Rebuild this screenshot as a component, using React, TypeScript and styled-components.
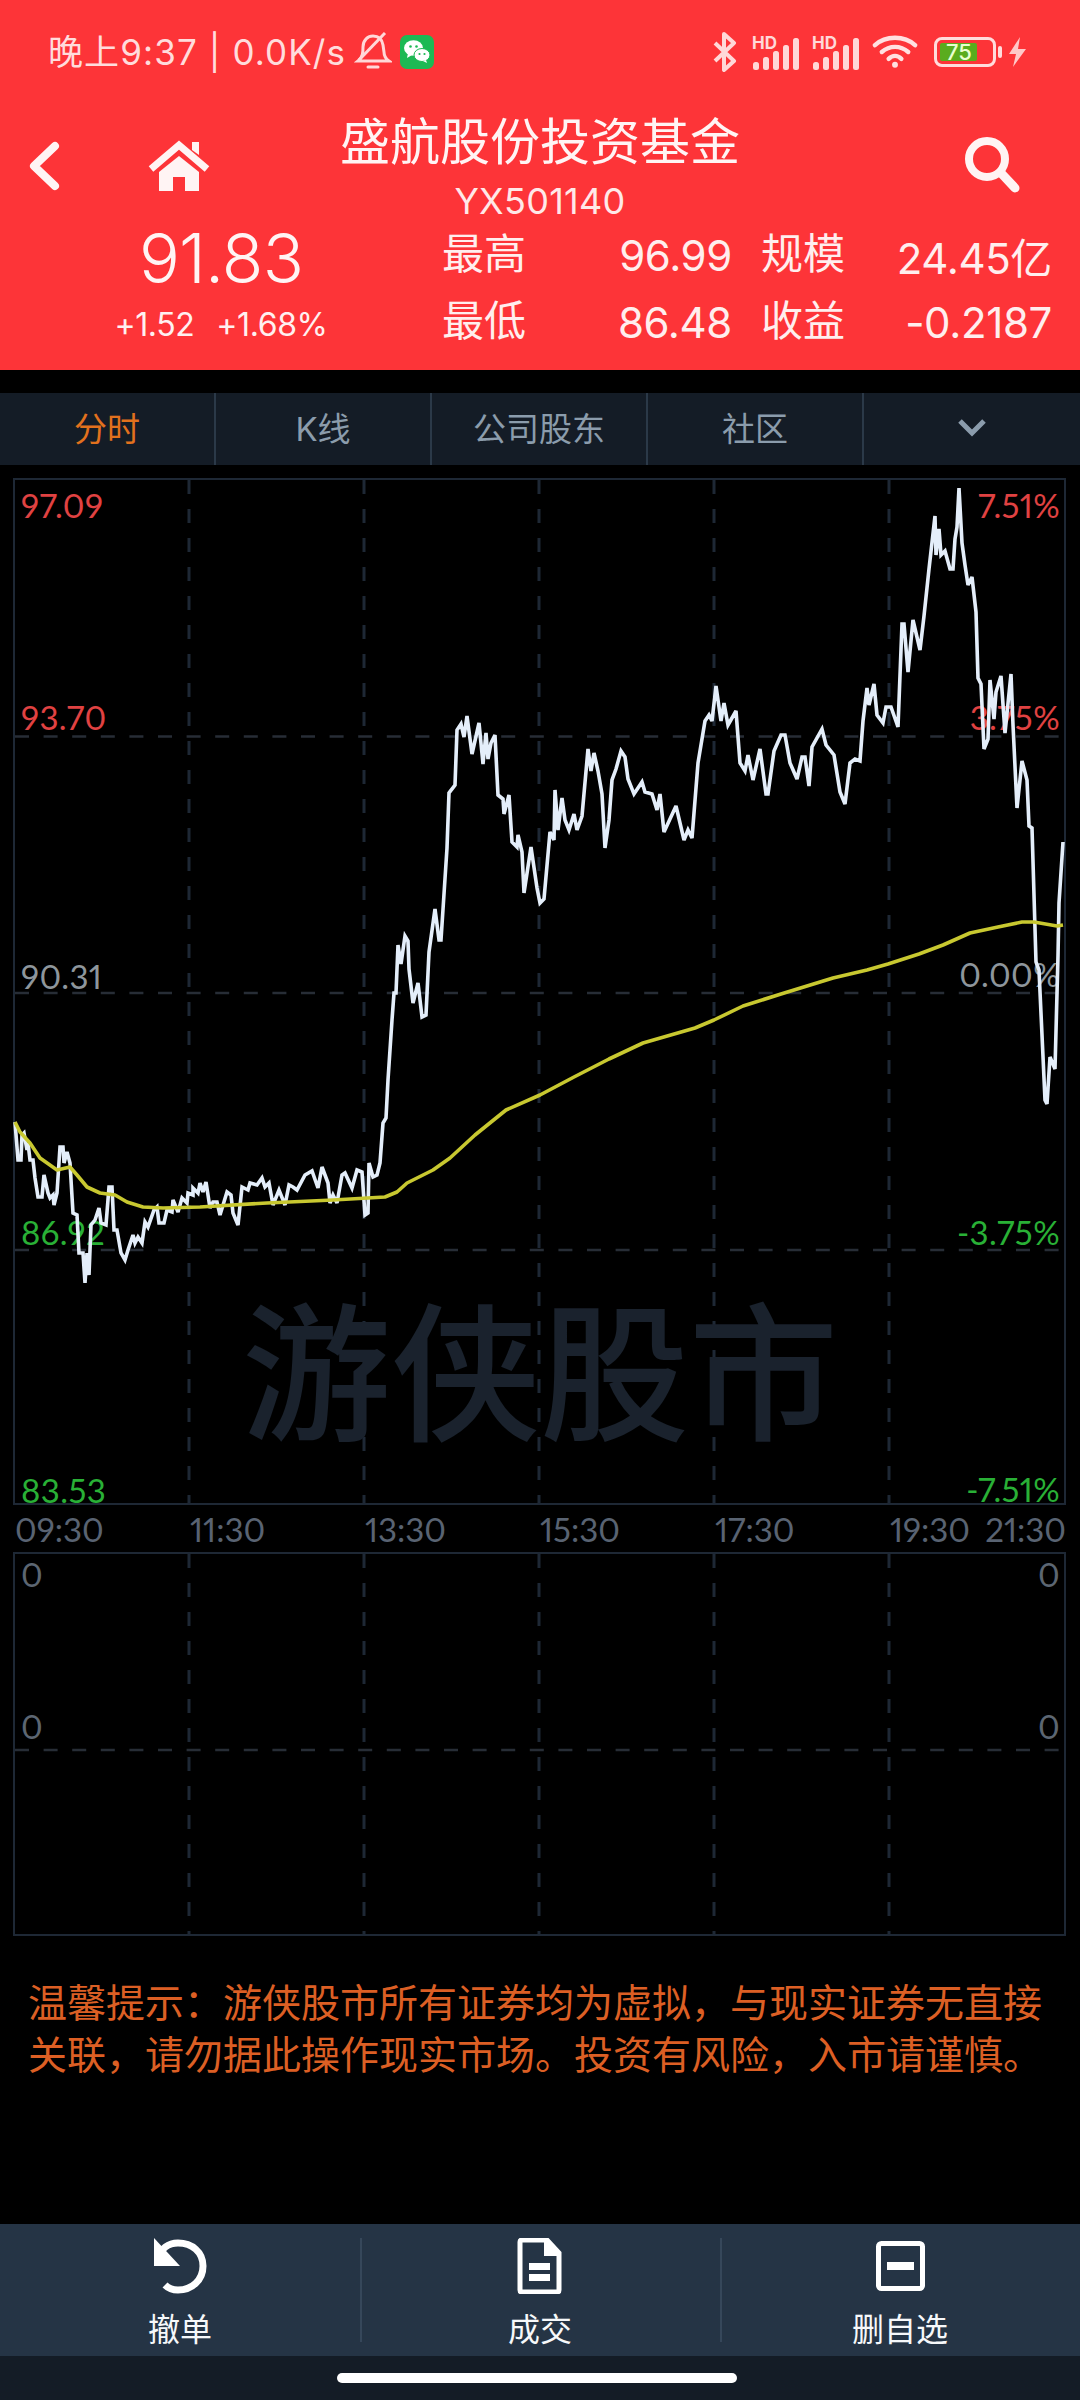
import React from "react";
import styled, { createGlobalStyle } from "styled-components";

const GlobalStyle = createGlobalStyle`
  html, body { margin: 0; padding: 0; background: #000; }
  body { width: 1080px; height: 2400px; overflow: hidden; font-family: Inter, "Noto Sans CJK SC", sans-serif; }
  #root { width: 1080px; height: 2400px; }
`;

const CJK = `Inter, "Noto Sans CJK SC", sans-serif`;
const NUM = `Lato, "Noto Sans CJK SC", sans-serif`;

const Page = styled.div`
  width: 1080px; height: 2400px; background: #000; display: flex; flex-direction: column; font-family: ${CJK};
`;
const Header = styled.header`
  height: 370px; background: #fd3438; color: #fff0f0; display: flex; flex-direction: column; flex: none;
`;
const StatusBar = styled.div`
  height: 104px; display: flex; align-items: center; justify-content: space-between; padding: 0 53px 0 48px; flex: none; color: #ffdcdc;
`;
const StatusGroup = styled.div<{ $gap: number }>`
  display: flex; align-items: center; gap: ${p => p.$gap}px;
`;
const StatusText = styled.span`
  font-size: 35px; line-height: 40px; letter-spacing: 1.1px; white-space: nowrap; font-weight: 400;
`;
const NavRow = styled.div`
  height: 118px; position: relative; display: flex; align-items: flex-start; justify-content: center; flex: none;
`;
const NavLeft = styled.div`
  position: absolute; left: 28px; top: 36px; display: flex; align-items: center; gap: 88px;
`;
const NavRight = styled.div`
  position: absolute; right: 59px; top: 31px;
`;
const TitleBlock = styled.div`
  display: flex; flex-direction: column; align-items: center; width: 500px; padding-top: 11px;
`;
const Title = styled.div`
  font-size: 50px; line-height: 54px; color: #fff4f4; white-space: nowrap;
`;
const Code = styled.div`
  font-size: 36px; line-height: 40px; margin-top: 12px; letter-spacing: 0.3px; color: #ffe8e8;
`;
const QuoteRow = styled.div`
  flex: 1; display: flex; align-items: flex-start;
`;
const PriceBlock = styled.div`
  width: 442px; flex: none; display: flex; flex-direction: column; align-items: center;
`;
const Price = styled.div`
  font-size: 68px; line-height: 72px; font-weight: 300; letter-spacing: -0.8px; color: #fff4f4;
`;
const Change = styled.div`
  display: flex; gap: 22px; margin-top: 13px; font-size: 32px; line-height: 36px; letter-spacing: -0.4px;
`;
const StatsGrid = styled.div`
  display: grid; grid-template-columns: 290px 291px; grid-auto-rows: 67px; column-gap: 29px; margin-top: -5px;
`;
const StatCell = styled.div`
  display: flex; justify-content: space-between; align-items: center; font-size: 42px; color: #ffeeee; white-space: nowrap;
`;
const StatValue = styled.span`
  font-size: 42px; letter-spacing: -0.35px; padding-top: 9px;
`;
const Tabs = styled.nav`
  margin-top: 23px; height: 72px; background: #141c26; display: grid; grid-template-columns: repeat(5, 216px); flex: none;
`;
const Tab = styled.div<{ $active?: boolean }>`
  display: flex; align-items: center; justify-content: center; font-size: 33px; padding-bottom: 5px; box-sizing: border-box;
  color: ${p => (p.$active ? "#e2711d" : "#8b9cac")};
  border-right: 2px solid #2b3948;
  &:last-child { border-right: none; }
`;
const ChartPanel = styled.section`
  position: relative; margin: 13px 14px 0 13px; height: 1027px; box-sizing: border-box; border: 2px solid #1e2835; flex: none;
`;
const VolumePanel = styled.section`
  position: relative; margin: 0 14px 0 13px; height: 384px; box-sizing: border-box; border: 2px solid #1e2835; flex: none;
`;
const ChartSvg = styled.svg`
  position: absolute; left: 0; top: 0; overflow: visible; z-index: 2; display: block;
`;
const GridSvg = styled.svg`
  position: absolute; left: 0; top: 0; overflow: visible; z-index: 0; display: block;
`;
const Watermark = styled.div`
  position: absolute; left: 227px; top: 799px; font-size: 149px; line-height: 170px; color: #1a222d; white-space: nowrap; z-index: 0; font-family: "Noto Sans CJK SC", sans-serif; font-weight: 500;
`;
const AxisLabel = styled.span<{ $top: number; $right?: boolean; $color: string }>`
  position: absolute; top: ${p => p.$top}px; ${p => (p.$right ? "right: 4px;" : "left: 6px;")}
  font-family: ${NUM}; font-size: 33px; line-height: 36px; color: ${p => p.$color}; z-index: 1; font-weight: 400; letter-spacing: 0.4px;
  font-variant-numeric: proportional-nums;
`;
const TimeAxis = styled.div`
  height: 47px; margin-left: 15px; margin-right: 14px; display: grid; grid-template-columns: 175px 175px 175px 175px 175px 98px minmax(0, 1fr); align-items: center; flex: none;
  font-family: ${NUM}; font-size: 33px; color: #596372; font-weight: 400; font-variant-numeric: proportional-nums;
`;
const TimeEnd = styled.span`
  justify-self: end; white-space: nowrap;
`;
const Notice = styled.p`
  margin: 41px 26px 0 28px; font-size: 39px; line-height: 52px; color: #dc5f24; flex: none;
`;
const Spacer = styled.div`
  flex: 1;
`;
const ActionBar = styled.div`
  height: 132px; background: #253445; display: grid; grid-template-columns: repeat(3, 360px); flex: none;
`;
const Action = styled.div`
  display: flex; flex-direction: column; align-items: center; position: relative; color: #f6f8fa; padding-top: 14px; box-sizing: border-box;
  & + &::before { content: ""; position: absolute; left: 0; top: 14px; bottom: 14px; width: 2px; background: #36475a; }
`;
const ActionIcon = styled.svg`
  display: block; height: 56px; width: 60px; flex: none;
`;
const ActionLabel = styled.span`
  font-size: 32px; line-height: 40px; margin-top: 16px;
`;
const HomeBar = styled.div`
  height: 44px; background: #141c26; display: flex; justify-content: center; padding: 17px 7px 0 0; box-sizing: border-box; flex: none;
`;
const HomePill = styled.div`
  width: 400px; height: 10px; border-radius: 5px; background: #fff;
`;

const priceLine = "15,1122 18,1160 21,1160 22,1135 24,1133 27,1150 28,1143 30,1160 33,1160 35,1178 38,1197 42,1197 44,1175 48,1193 50,1198 53,1195 54,1205 57,1193 60,1147 63,1147 64,1163 67,1152 70,1163 73,1213 77,1215 79,1253 83,1253 85,1283 87,1253 89,1275 91,1225 95,1220 99,1208 101,1223 106,1225 109,1187 112,1187 114,1230 117,1230 121,1253 125,1260 128,1250 133,1235 135,1243 138,1237 142,1243 145,1222 148,1227 154,1210 157,1207 159,1223 164,1223 167,1210 172,1212 173,1200 178,1212 182,1198 187,1203 188,1193 193,1195 193,1188 198,1193 200,1183 203,1192 206,1182 210,1208 213,1202 217,1202 220,1215 227,1192 231,1195 233,1213 238,1225 242,1187 248,1190 250,1183 257,1185 262,1178 265,1187 269,1183 273,1205 279,1190 285,1205 289,1185 293,1187 297,1190 305,1175 312,1171 318,1188 322,1167 328,1183 330,1203 333,1195 337,1203 342,1175 345,1173 352,1188 357,1170 362,1172 365,1215 368,1213 369,1163 373,1177 377,1175 380,1163 383,1123 386,1118 388,1080 392,1020 394,993 396,993 398,945 401,964 405,936 408,941 409,969 413,1003 418,983 422,1017 426,1015 429,952 435,909 439,940 441,940 447,848 449,793 455,785 457,730 461,724 464,737 467,716 472,754 479,723 483,764 486,733 488,759 491,743 495,735 498,795 503,799 504,814 509,795 512,842 517,847 518,835 522,852 524,893 531,847 537,888 540,903 544,899 550,832 554,840 555,790 558,830 562,798 565,820 569,830 574,814 577,830 582,816 588,749 591,771 594,753 598,771 602,794 605,848 609,820 612,780 616,769 621,751 625,757 628,779 634,794 642,782 645,792 652,794 657,810 660,794 664,832 676,806 684,840 688,830 692,838 698,763 705,721 709,715 712,721 716,686 721,721 724,703 728,725 736,711 740,763 745,771 748,755 753,780 760,749 766,794 768,794 774,751 781,735 785,735 790,763 797,779 802,757 805,757 809,786 812,747 822,729 826,745 834,755 840,792 845,804 850,763 855,759 860,761 863,721 867,688 869,705 874,684 877,715 883,723 886,707 891,707 898,727 902,624 904,624 908,672 913,620 920,650 924,616 929,569 935,516 936,555 939,529 941,555 945,551 950,569 953,569 955,539 957,527 959,488 962,543 965,565 968,585 972,577 976,612 978,678 981,684 984,749 988,739 990,680 994,719 996,692 1001,676 1005,733 1011,674 1013,725 1017,808 1022,761 1027,780 1029,826 1032,828 1036,962 1039,970 1045,1100 1047,1104 1050,1057 1055,1069 1058,956 1059,903 1063,842";
const avgLine = "15,1122 20,1132 30,1143 40,1158 57,1170 70,1167 77,1175 87,1187 100,1193 115,1195 127,1202 143,1207 163,1208 200,1207 267,1203 333,1200 385,1197 397,1192 407,1183 433,1170 450,1158 475,1135 506,1110 540,1095 574,1077 609,1059 643,1043 695,1028 714,1020 743,1006 781,994 833,978 867,970 888,964 919,954 943,945 970,933 998,927 1022,922 1034,922 1057,926 1063,925";

const VX = [189, 364, 539, 714, 889];
const RED = "#e04242";
const GREEN = "#29b036";
const GREY = "#8e969c";
const ZERO = "#5c6672";

function Grid({ w, h, ox, oy, hs }: { w: number; h: number; ox: number; oy: number; hs: number[] }) {
  return (
    <GridSvg width={w} height={h} viewBox={`${ox} ${oy} ${w} ${h}`}>
      {VX.map(x => (
        <line key={x} x1={x} x2={x} y1={oy} y2={oy + h} stroke="#1e2835" strokeWidth="3" strokeDasharray="14 15" />
      ))}
      {hs.map(y => (
        <line key={y} x1={ox} x2={ox + w} y1={y} y2={y} stroke="#272d36" strokeWidth="2.5" strokeDasharray="14 14.6" />
      ))}
    </GridSvg>
  );
}

function Bell() {
  return (
    <svg width="38" height="40" viewBox="0 0 38 40" fill="none" stroke="#ffd8d8" strokeWidth="3">
      <path d="M4 29 C9 25 9 20 9 15 C9 8 14 4 19 4 C24 4 28 7 29 13 L30 20 C30 24 32 27 35 29 Z" />
      <path d="M14 35 H24" strokeLinecap="round" />
      <path d="M5 28 L31 1" />
    </svg>
  );
}
function WeChat() {
  return (
    <svg width="34" height="34" viewBox="0 0 34 34">
      <rect width="34" height="34" rx="7" fill="#1db954" />
      <ellipse cx="13.5" cy="13" rx="9.5" ry="7.8" fill="#fff" />
      <path d="M8 18 L7 23 L12 20 Z" fill="#fff" />
      <ellipse cx="22" cy="20" rx="8" ry="6.5" fill="#fff" stroke="#1db954" strokeWidth="1" />
      <path d="M26 25 L27 28 L23 26 Z" fill="#fff" />
      <circle cx="10.5" cy="11.5" r="1.3" fill="#1db954" /><circle cx="16.5" cy="11.5" r="1.3" fill="#1db954" />
      <circle cx="19.5" cy="19" r="1.1" fill="#1db954" /><circle cx="24.5" cy="19" r="1.1" fill="#1db954" />
    </svg>
  );
}
const BluetoothSvg = styled.svg`
  margin-right: 2px;
`;
function Bluetooth() {
  return (
    <BluetoothSvg width="26" height="40" viewBox="0 0 26 40" fill="none" stroke="#ffd8d8" strokeWidth="4" strokeLinejoin="round">
      <path d="M3 11 L22 29 L12 38 V2 L22 11 L3 29" />
    </BluetoothSvg>
  );
}
function Signal() {
  const bars = [[1, 8], [11, 13], [21, 19], [31, 25], [41, 32]];
  return (
    <svg width="48" height="42" viewBox="0 0 48 42">
      <text x="0" y="18" fontSize="17" fontWeight="700" fill="#ffd8d8" fontFamily="Inter, sans-serif">HD</text>
      {bars.map(([x, h]) => (
        <rect key={x} x={x} y={39 - h} width="6" height={h} rx="2.5" fill="#ffd8d8" />
      ))}
    </svg>
  );
}
function Wifi() {
  return (
    <svg width="47" height="36" viewBox="0 0 48 36" fill="none" stroke="#ffe0e0" strokeWidth="4.5" strokeLinecap="round">
      <path d="M3 11 C14 1 33 1 44 11" />
      <path d="M10 18 C18 11 29 11 37 18" />
      <path d="M17 25 C21 21 26 21 30 25" />
      <circle cx="23.5" cy="31" r="3" fill="#ffe0e0" stroke="none" />
    </svg>
  );
}
const Battery = styled.div`
  display: flex; align-items: center; gap: 2px; margin-left: 3px; margin-right: -7px;
`;
const BatteryShell = styled.div`
  width: 62px; height: 30px; box-sizing: border-box; border: 3px solid #ffdcdc; border-radius: 8px; padding: 3px; display: flex;
`;
const BatteryFill = styled.div`
  width: 62%; background: #5aac1e; border-radius: 2px; color: #e9ffd0; font-size: 22px; line-height: 18px; padding-left: 6px; font-weight: 500; white-space: nowrap;
`;
const BatteryKnob = styled.div`
  width: 4px; height: 12px; border-radius: 2px; background: #ffdcdc;
`;
function Bolt() {
  return (
    <svg width="20" height="30" viewBox="0 0 20 30">
      <path d="M13 0 L2 17 H9 L6 30 L19 12 H11 Z" fill="#ffc8c8" />
    </svg>
  );
}

export default function App() {
  return (
    <Page>
      <GlobalStyle />
      <Header>
        <StatusBar>
          <StatusGroup $gap={8}>
            <StatusText>晚上9:37 | 0.0K/s</StatusText>
            <Bell />
            <WeChat />
          </StatusGroup>
          <StatusGroup $gap={12}>
            <Bluetooth />
            <Signal />
            <Signal />
            <Wifi />
            <Battery>
              <BatteryShell><BatteryFill>75</BatteryFill></BatteryShell>
              <BatteryKnob />
            </Battery>
            <Bolt />
          </StatusGroup>
        </StatusBar>
        <NavRow>
          <NavLeft>
            <svg width="32" height="50" viewBox="0 0 32 50" fill="none" stroke="#fff4f4" strokeWidth="8" strokeLinecap="round" strokeLinejoin="round">
              <path d="M27 5 L6 25 L27 45" />
            </svg>
            <svg width="62" height="52" viewBox="0 0 62 52">
              <path d="M3 29 L31 5 L59 29" fill="none" stroke="#fff4f4" strokeWidth="7" strokeLinejoin="miter" />
              <path d="M44 2 H51 V15 L44 10 Z" fill="#fff4f4" />
              <path d="M31 16 L51 32 V51 H37 V37 H25 V51 H11 V32 Z" fill="#fff4f4" />
            </svg>
          </NavLeft>
          <TitleBlock>
            <Title>盛航股份投资基金</Title>
            <Code>YX501140</Code>
          </TitleBlock>
          <NavRight>
            <svg width="58" height="58" viewBox="0 0 58 58" fill="none" stroke="#fff4f4" strokeLinecap="round">
              <circle cx="24" cy="24" r="18" strokeWidth="8" />
              <path d="M38 38 L52 53" strokeWidth="9" />
            </svg>
          </NavRight>
        </NavRow>
        <QuoteRow>
          <PriceBlock>
            <Price>91.83</Price>
            <Change><span>+1.52</span><span>+1.68%</span></Change>
          </PriceBlock>
          <StatsGrid>
            <StatCell>最高<StatValue>96.99</StatValue></StatCell>
            <StatCell>规模<StatValue>24.45亿</StatValue></StatCell>
            <StatCell>最低<StatValue>86.48</StatValue></StatCell>
            <StatCell>收益<StatValue>-0.2187</StatValue></StatCell>
          </StatsGrid>
        </QuoteRow>
      </Header>
      <Tabs>
        <Tab $active>分时</Tab>
        <Tab>K线</Tab>
        <Tab>公司股东</Tab>
        <Tab>社区</Tab>
        <Tab>
          <svg width="30" height="20" viewBox="0 0 30 20" fill="none" stroke="#8b9cac" strokeWidth="5">
            <path d="M3 4 L15 16 L27 4" />
          </svg>
        </Tab>
      </Tabs>
      <ChartPanel>
        <Grid w={1049} h={1023} ox={15} oy={480} hs={[736.5, 993, 1250]} />
        <Watermark>游侠股市</Watermark>
        <AxisLabel $top={7} $color={RED}>97.09</AxisLabel>
        <AxisLabel $top={219} $color={RED}>93.70</AxisLabel>
        <AxisLabel $top={478} $color={GREY}>90.31</AxisLabel>
        <AxisLabel $top={734} $color={GREEN}>86.92</AxisLabel>
        <AxisLabel $top={992} $color={GREEN}>83.53</AxisLabel>
        <AxisLabel $right $top={7} $color={RED}>7.51%</AxisLabel>
        <AxisLabel $right $top={219} $color={RED}>3.75%</AxisLabel>
        <AxisLabel $right $top={476} $color={GREY}>0.00%</AxisLabel>
        <AxisLabel $right $top={734} $color={GREEN}>-3.75%</AxisLabel>
        <AxisLabel $right $top={991} $color={GREEN}>-7.51%</AxisLabel>
        <ChartSvg width={1049} height={1023} viewBox="15 480 1049 1023" fill="none">
          <polyline points={priceLine} stroke="#e4eefa" strokeWidth="3.6" strokeLinejoin="miter" strokeMiterlimit="3" />
          <polyline points={avgLine} stroke="#c8c830" strokeWidth="3.6" strokeLinejoin="round" />
        </ChartSvg>
      </ChartPanel>
      <TimeAxis>
        <span>09:30</span><span>11:30</span><span>13:30</span><span>15:30</span><span>17:30</span><span>19:30</span><TimeEnd>21:30</TimeEnd>
      </TimeAxis>
      <VolumePanel>
        <Grid w={1049} h={380} ox={15} oy={1555} hs={[1751]} />
        <AxisLabel $top={2} $color={ZERO}>0</AxisLabel>
        <AxisLabel $top={154} $color={ZERO}>0</AxisLabel>
        <AxisLabel $right $top={2} $color={ZERO}>0</AxisLabel>
        <AxisLabel $right $top={154} $color={ZERO}>0</AxisLabel>
      </VolumePanel>
      <Notice>温馨提示：游侠股市所有证券均为虚拟，与现实证券无直接关联，请勿据此操作现实市场。投资有风险，入市请谨慎。</Notice>
      <Spacer />
      <ActionBar>
        <Action>
          <ActionIcon viewBox="0 0 60 56" fill="none" stroke="#fff">
            <path d="M8 22 C10 10 19 5 28 5 C42 5 53 14 53 28 C53 42 42 52 28 52 C23 52 18 50 15 47" strokeWidth="7" strokeLinecap="butt" />
            <path d="M4 0 V28 H30 Z" fill="#fff" stroke="none" />
          </ActionIcon>
          <ActionLabel>撤单</ActionLabel>
        </Action>
        <Action>
          <ActionIcon viewBox="0 0 60 56" fill="none" stroke="#fff">
            <path d="M12 2 H37 L49 15 V52 Q49 54 47 54 H12 Q10 54 10 52 V4 Q10 2 12 2 Z" strokeWidth="5" />
            <path d="M36 2 V16 H50" strokeWidth="4" fill="#fff" />
            <rect x="19" y="25" width="21" height="7" fill="#fff" stroke="none" />
            <rect x="19" y="36" width="21" height="7" fill="#fff" stroke="none" />
          </ActionIcon>
          <ActionLabel>成交</ActionLabel>
        </Action>
        <Action>
          <ActionIcon viewBox="0 0 60 56" fill="none" stroke="#fff">
            <rect x="8.5" y="5.5" width="44" height="45" rx="3" strokeWidth="5" />
            <rect x="17" y="24" width="27" height="8" fill="#fff" stroke="none" />
          </ActionIcon>
          <ActionLabel>删自选</ActionLabel>
        </Action>
      </ActionBar>
      <HomeBar><HomePill /></HomeBar>
    </Page>
  );
}
